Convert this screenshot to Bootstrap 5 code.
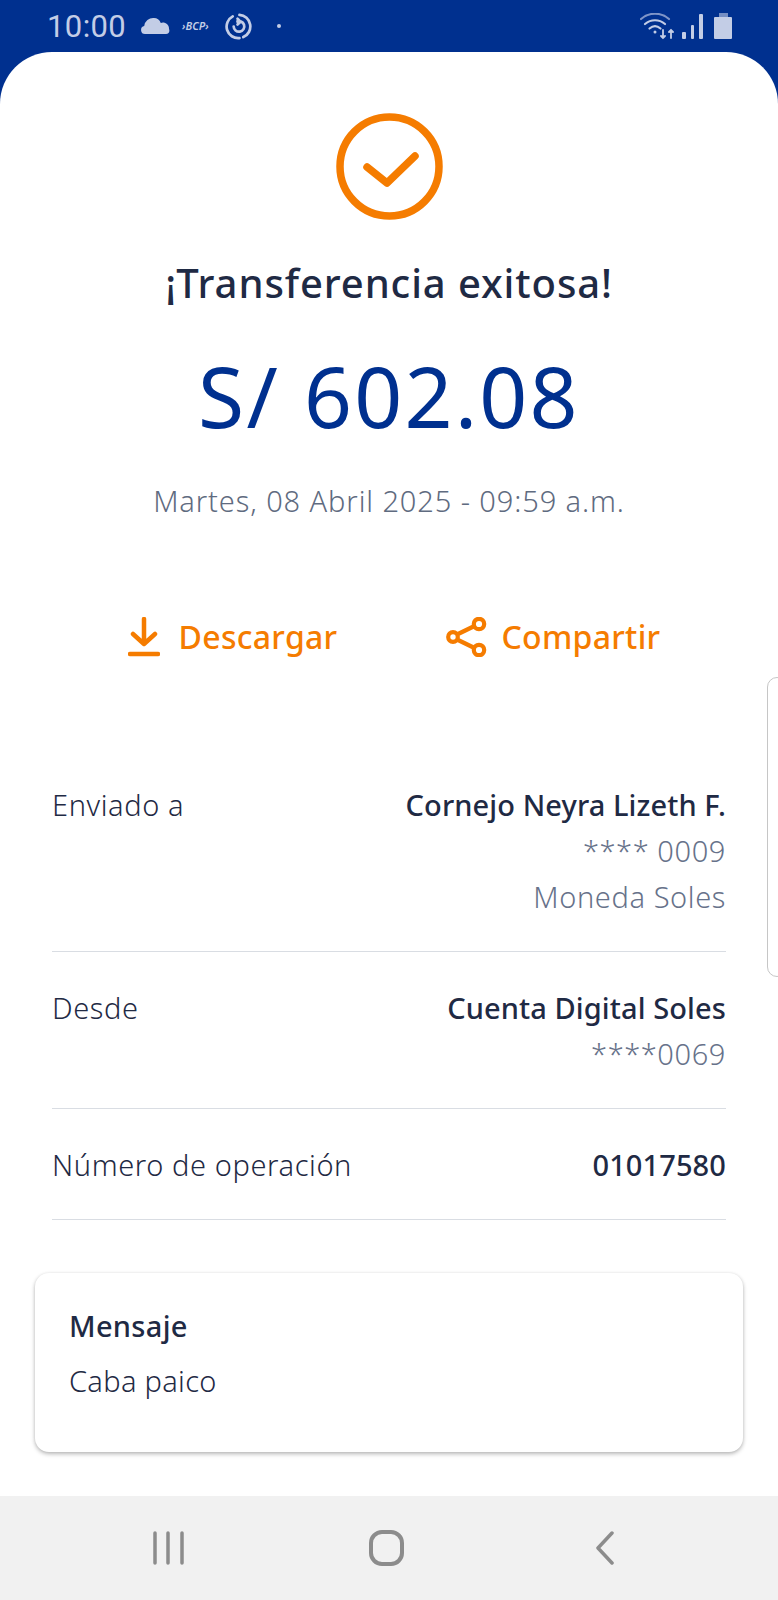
<!DOCTYPE html>
<html lang="es">
<head>
  <meta charset="UTF-8">
  <title>Transferencia exitosa</title>
  <meta name="viewport" content="width=device-width, initial-scale=1">
  <link href="https://cdn.jsdelivr.net/npm/bootstrap@5.3.3/dist/css/bootstrap.min.css" rel="stylesheet">
  <style>
    body { background: #00308f; font-family: "Noto Sans", "Liberation Sans", sans-serif; color: #1f2a44; }
    .phone { width: 778px; height: 1600px; position: relative; overflow: hidden; }

    .status-bar { height: 52px; padding: 0 45px 0 47px; color: #c3cde6; }
    .status-time { font-family: Roboto, sans-serif; font-size: 31px; line-height: 1; width: 80px; margin-right: 14px; letter-spacing: .4px; }
    .status-bcp { font-size: 11px; font-style: italic; font-weight: 600; width: 32px; margin: 0 11px 0 11px; white-space: nowrap; }

    .sheet { background: #fff; border-radius: 52px 52px 0 0; height: 1444px; padding-top: 61px; }
    .ok-icon { display: block; margin: 0 auto; }
    .title { font-size: 40px; font-weight: 500; line-height: 48px; margin: 39px 0 0; color: #1f2a44; letter-spacing: .9px; }
    .amount { font-size: 84px; font-weight: 400; line-height: 96px; margin: 41px 0 0; color: #00308f; letter-spacing: 2.2px; }
    .stamp { font-size: 29px; font-weight: 300; line-height: 36px; margin: 39px 0 0; color: #5f6b80; letter-spacing: .9px; }

    .actions { margin-top: 98px; margin-left: 10px; gap: 109px; }
    .act-btn { color: #f57c00; font-size: 32px; font-weight: 500; line-height: 40px; padding: 0; border: 0; gap: 19px; letter-spacing: .3px; }
    .act-share { gap: 14px; }

    .rows { margin: 125px 52px 0; }
    .detail-row { border-bottom: 1px solid #d9dde3; font-size: 29px; line-height: 46px; font-weight: 300; letter-spacing: .6px; }
    .detail-row .who { font-weight: 500; color: #1f2a44; letter-spacing: .1px; }
    .detail-row .sub { color: #67728a; }
    .row-to { height: 170px; }
    .row-from { height: 157px; padding-top: 33px; }
    .row-num { height: 111px; padding-top: 33px; }
    .msg-card { margin: 53px 35px 0; height: 179px; border: 0; border-radius: 14px; box-shadow: 0 2px 4px rgba(0,0,0,.28), 0 0 3px rgba(0,0,0,.06); padding: 25px 35px 25px 34px; font-size: 29px; line-height: 55px; font-weight: 300; letter-spacing: .3px; }
    .msg-card strong { font-weight: 500; display: block; }

    .nav-bar { background: #f1f1f1; height: 104px; position: absolute; left: 0; right: 0; bottom: 0; padding: 0 161px 0 152px; }
    .nav-home { margin-left: -6px; }
    .edge-handle { position: absolute; left: 767px; top: 677px; width: 20px; height: 300px; border: 1.5px solid #c6c6c6; border-radius: 12px; }
  </style>
</head>
<body class="m-0">
  <div class="phone">
    <div class="status-bar d-flex align-items-center">
      <span class="status-time">10:00</span>
      <svg width="30" height="18" viewBox="0 0 30 18" fill="#c3cde6"><path d="M4 17a4 4 0 0 1-.8-7.9A9 9 0 0 1 13 1c3 0 5.600 1.700 6.800 5A6 6 0 0 1 28 12c1 2 0 5-3 5z"/></svg>
      <span class="status-bcp">&rsaquo;BCP&rsaquo;</span>
      <svg width="27" height="27" viewBox="0 0 28 28" fill="none" stroke="#c3cde6" stroke-width="2.800" stroke-linecap="round"><path d="M15 2a12 12 0 0 1 4 23"/><path d="M15 26A12 12 0 0 1 8 3.500"/><path d="M9 14a5.500 5.500 0 1 0 3-5h4M13 6l3 3-3 3"/></svg>
      <svg class="ms-4" width="6" height="6" viewBox="0 0 6 6" fill="#c3cde6"><circle cx="3" cy="3" r="2"/></svg>
      <span class="ms-auto d-flex align-items-end gap-2">
        <svg width="34" height="27" viewBox="0 0 34 27" fill="none" stroke="#c3cde6" stroke-width="2.200" stroke-linecap="round"><path d="M1 6c8-7 20-7 28 0" opacity=".65"/><path d="M5 11c6-5 14-5 20 0"/><path d="M9.500 15.500c3.500-3 7.500-3 11 0"/><circle cx="15" cy="19" r="1.500" fill="#c3cde6" stroke="none"/><path d="M23 17v8M21 23l2 2 2-2M31 25v-8M29 19l2-2 2 2" stroke-width="1.800"/></svg>
        <svg width="24" height="27" viewBox="0 0 24 27" fill="#c3cde6"><rect x="0" y="19" width="4" height="7" rx="1"/><rect x="9" y="12" width="3" height="14" rx="1"/><rect x="17" y="1" width="4" height="25" rx="1"/></svg>
        <svg width="19" height="27" viewBox="0 0 19 27" fill="#c3cde6"><rect x="5" y="0" width="9" height="4" opacity=".6"/><rect x="0" y="4" width="18" height="22" rx="1"/></svg>
      </span>
    </div>

    <div class="sheet">
      <svg class="ok-icon" width="107" height="107" viewBox="0 0 107 107" fill="none" stroke="#f57c00" stroke-linecap="round" stroke-linejoin="round"><circle cx="53.500" cy="53.500" r="49.500" stroke-width="7.500"/><path d="M31 54l20 16 28-27" stroke-width="7.500"/></svg>
      <h1 class="title text-center">¡Transferencia exitosa!</h1>
      <p class="amount text-center">S/ 602.08</p>
      <p class="stamp text-center">Martes, 08 Abril 2025 - 09:59 a.m.</p>

      <div class="actions d-flex justify-content-center">
        <button class="act-btn btn d-flex align-items-center">
          <svg width="32" height="40" viewBox="0 0 32 40" fill="none" stroke="#f57c00" stroke-width="4.500" stroke-linecap="round" stroke-linejoin="round"><path d="M16 2v25M5 17l11 10 11-10M2 37h28"/></svg>
          Descargar
        </button>
        <button class="act-btn act-share btn d-flex align-items-center">
          <svg width="41" height="40" viewBox="0 0 41 40" fill="none" stroke="#f57c00" stroke-width="4.200"><circle cx="7" cy="20" r="4.800"/><circle cx="33" cy="7" r="5.200"/><circle cx="33" cy="33" r="5.200"/><path d="M11 17.500 28.500 9M11 22.500 28.500 31"/></svg>
          Compartir
        </button>
      </div>

      <div class="rows">
        <div class="detail-row row-to d-flex justify-content-between">
          <span>Enviado a</span>
          <span class="text-end"><span class="who d-block">Cornejo Neyra Lizeth F.</span><span class="sub d-block">**** 0009</span><span class="sub d-block">Moneda Soles</span></span>
        </div>
        <div class="detail-row row-from d-flex justify-content-between">
          <span>Desde</span>
          <span class="text-end"><span class="who d-block">Cuenta Digital Soles</span><span class="sub d-block">****0069</span></span>
        </div>
        <div class="detail-row row-num d-flex justify-content-between">
          <span>Número de operación</span>
          <span class="who">01017580</span>
        </div>
      </div>

      <div class="msg-card card d-block">
        <strong>Mensaje</strong>
        Caba paico
      </div>
    </div>

    <div class="edge-handle"></div>

    <div class="nav-bar d-flex align-items-center justify-content-between">
      <svg width="34" height="34" viewBox="0 0 34 34" fill="none" stroke="#8c8c8c" stroke-width="3.500" stroke-linecap="round"><path d="M3 2v30M16 2v30M30 2v30"/></svg>
      <svg class="nav-home" width="35" height="36" viewBox="0 0 35 36" fill="none" stroke="#8c8c8c" stroke-width="4"><rect x="2" y="2" width="31" height="32" rx="11"/></svg>
      <svg width="24" height="34" viewBox="0 0 24 34" fill="none" stroke="#8c8c8c" stroke-width="3.500" stroke-linecap="round" stroke-linejoin="round"><path d="M19 2 5 17l14 15"/></svg>
    </div>
  </div>
  <script src="https://cdn.jsdelivr.net/npm/bootstrap@5.3.3/dist/js/bootstrap.bundle.min.js"></script>
</body>
</html>
